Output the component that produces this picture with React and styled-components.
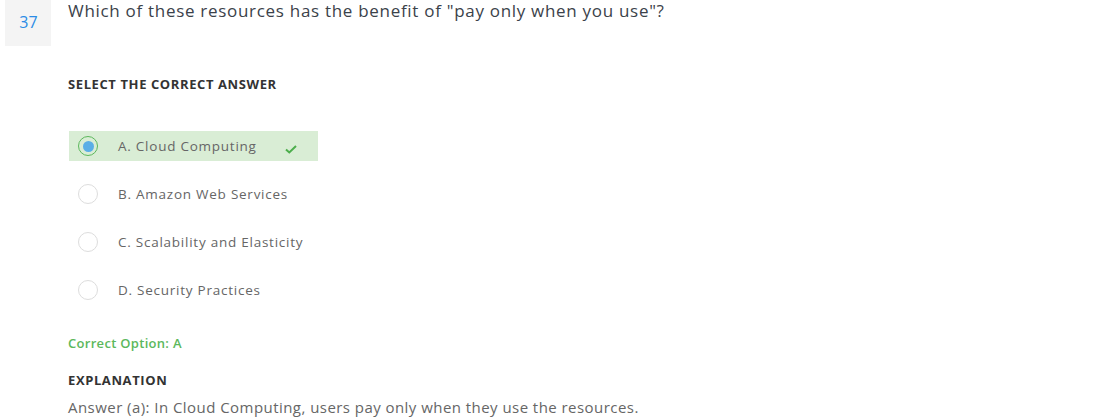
import React from "react";
import styled, { createGlobalStyle } from "styled-components";

const Global = createGlobalStyle`
  html, body { margin: 0; padding: 0; background: #fff; }
  body { font-family: "Open Sans", "DejaVu Sans", sans-serif; -webkit-font-smoothing: antialiased; }
`;

const Page = styled.div`
  display: flex;
  align-items: flex-start;
  padding-left: 5px;
  width: 1116px;
  height: 418px;
  box-sizing: border-box;
  overflow: hidden;
`;

const NumberBox = styled.div`
  width: 46px;
  height: 46px;
  flex: none;
  background: #f4f4f4;
  color: #2b8ce6;
  font-size: 16px;
  display: flex;
  align-items: center;
  justify-content: center;
  padding-bottom: 2px;
  padding-left: 1px;
  box-sizing: border-box;
`;

const Content = styled.div`
  margin-left: 17px;
  display: flex;
  flex-direction: column;
`;

const Question = styled.div`
  font-size: 17px;
  line-height: 22px;
  color: #3b424a;
  letter-spacing: 0.7px;
`;

const SectionTitle = styled.div`
  font-size: 13px;
  font-weight: 700;
  color: #333;
  line-height: 16px;
  letter-spacing: 0.6px;
  margin-top: ${(p) => p.$mt}px;
`;

const Options = styled.div`
  display: flex;
  flex-direction: column;
  gap: 18px;
  margin-top: 39px;
`;

const Option = styled.div`
  display: flex;
  align-items: center;
  width: 249px;
  height: 30px;
  margin-left: 1px;
  background: ${(p) => (p.$correct ? "#d9edd5" : "transparent")};
  box-sizing: border-box;
  padding-left: 9px;
`;

const Radio = styled.span`
  width: 20px;
  height: 20px;
  border-radius: 50%;
  box-sizing: border-box;
  border: 1px solid ${(p) => (p.$checked ? "#5cb85c" : "#dddddd")};
  background: ${(p) => (p.$checked ? "transparent" : "#fff")};
  display: flex;
  align-items: center;
  justify-content: center;
  flex: none;
  &::after {
    content: "";
    display: ${(p) => (p.$checked ? "block" : "none")};
    width: 11px;
    height: 11px;
    border-radius: 50%;
    background: #5aaee6;
  }
`;

const OptionLabel = styled.span`
  margin-left: 20px;
  font-size: 13.5px;
  color: #666;
  letter-spacing: 0.75px;
`;

const Check = styled.svg`
  margin-left: 28px;
  margin-top: 7px;
  flex: none;
`;

const CorrectNote = styled.div`
  margin-top: 29px;
  font-size: 13px;
  font-weight: 600;
  color: #5cb85c;
  line-height: 18px;
  letter-spacing: 0.3px;
`;

const Explanation = styled.div`
  margin-top: 9px;
  font-size: 15px;
  line-height: 20px;
  color: #666;
  letter-spacing: 0.45px;
`;

const options = [
  { key: "A", text: "Cloud Computing", correct: true },
  { key: "B", text: "Amazon Web Services" },
  { key: "C", text: "Scalability and Elasticity" },
  { key: "D", text: "Security Practices" },
];

export default function App() {
  return (
    <>
      <Global />
      <Page>
        <NumberBox>37</NumberBox>
        <Content>
          <Question>Which of these resources has the benefit of "pay only when you use"?</Question>
          <SectionTitle $mt={54}>SELECT THE CORRECT ANSWER</SectionTitle>
          <Options>
            {options.map((o) => (
              <Option key={o.key} $correct={o.correct}>
                <Radio $checked={o.correct} />
                <OptionLabel>
                  {o.key}. {o.text}
                </OptionLabel>
                {o.correct && (
                  <Check width="12" height="9" viewBox="0 0 12 9">
                    <path d="M1 4.5 L4.3 7.5 L11 1" fill="none" stroke="#4cae4c" strokeWidth="2" />
                  </Check>
                )}
              </Option>
            ))}
          </Options>
          <CorrectNote>Correct Option: A</CorrectNote>
          <SectionTitle $mt={20}>EXPLANATION</SectionTitle>
          <Explanation>Answer (a): In Cloud Computing, users pay only when they use the resources.</Explanation>
        </Content>
      </Page>
    </>
  );
}
